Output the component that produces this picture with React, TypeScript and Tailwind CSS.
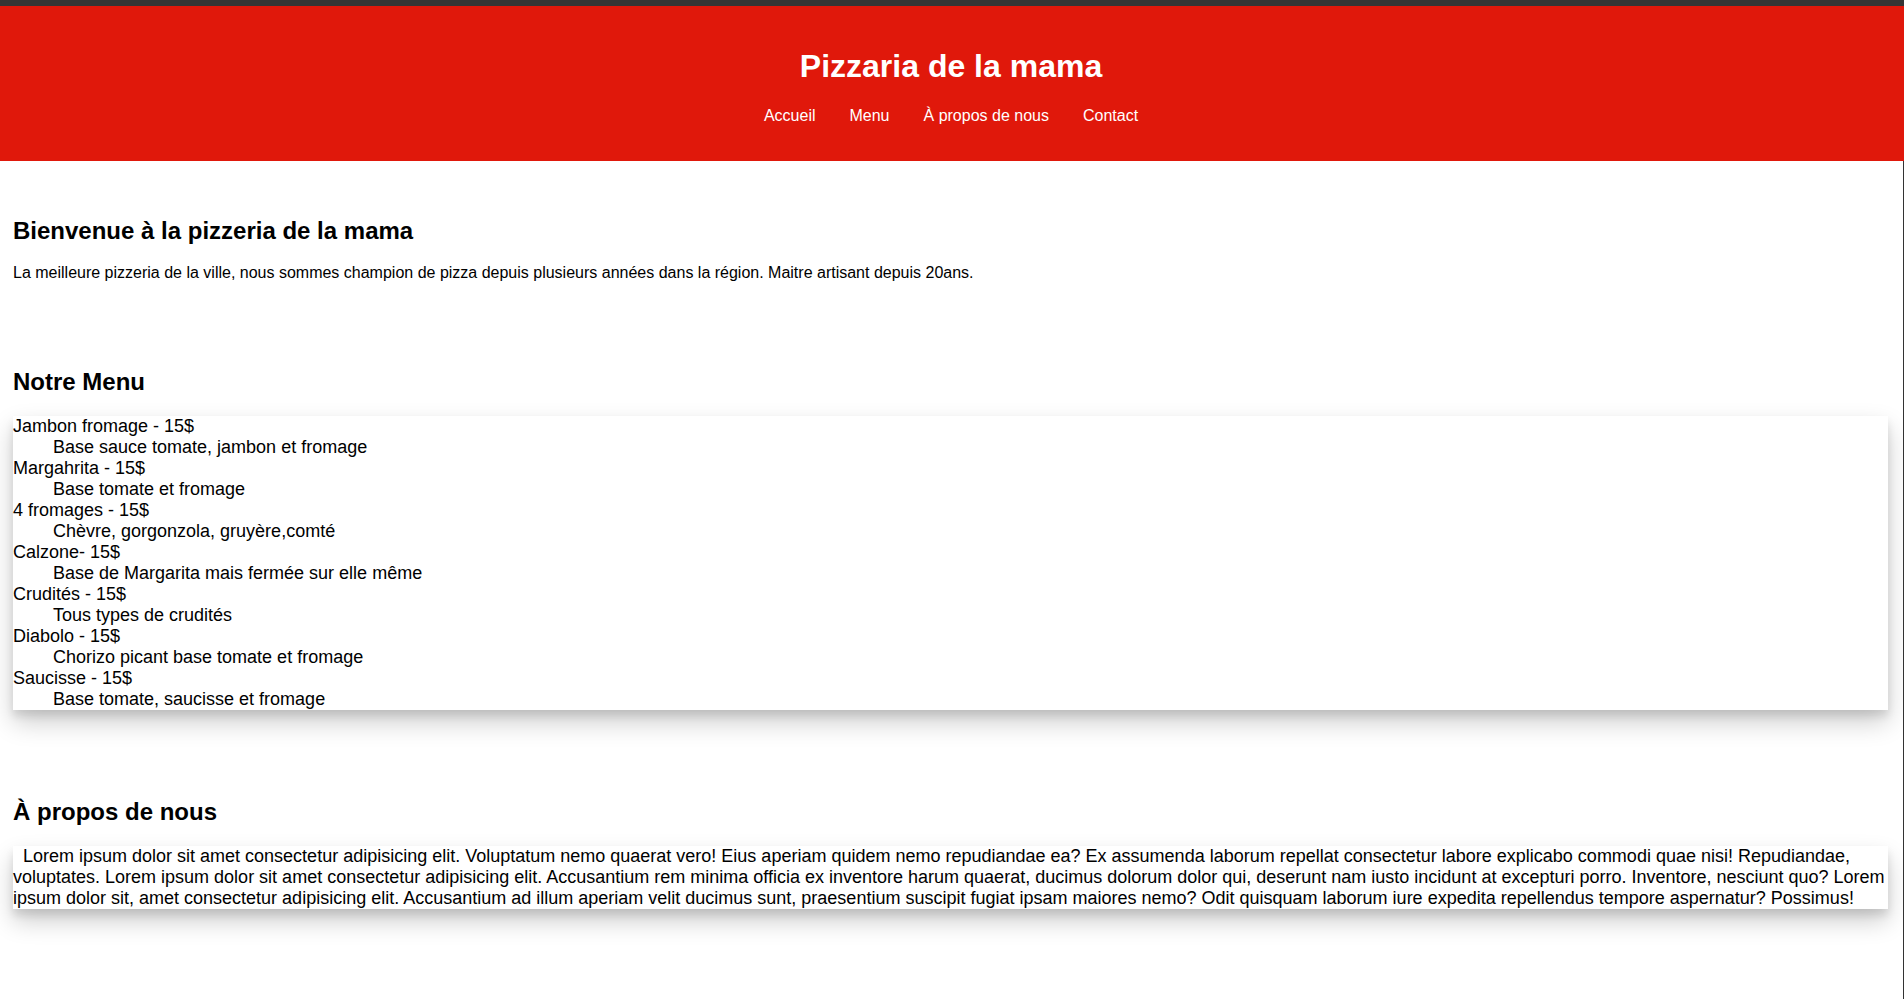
import React from "react";

const navLinks = ["Accueil", "Menu", "À propos de nous", "Contact"];

const pizzas = [
  { name: "Jambon fromage - 15$", desc: "Base sauce tomate, jambon et fromage" },
  { name: "Margahrita - 15$", desc: "Base tomate et fromage" },
  { name: "4 fromages - 15$", desc: "Chèvre, gorgonzola, gruyère,comté" },
  { name: "Calzone- 15$", desc: "Base de Margarita mais fermée sur elle même" },
  { name: "Crudités - 15$", desc: "Tous types de crudités" },
  { name: "Diabolo - 15$", desc: "Chorizo picant base tomate et fromage" },
  { name: "Saucisse - 15$", desc: "Base tomate, saucisse et fromage" },
];

const aboutText =
  "\u00a0\u00a0Lorem ipsum dolor sit amet consectetur adipisicing elit. Voluptatum nemo quaerat vero! Eius aperiam quidem nemo repudiandae ea? Ex assumenda laborum repellat consectetur labore explicabo commodi quae nisi! Repudiandae, voluptates. Lorem ipsum dolor sit amet consectetur adipisicing elit. Accusantium rem minima officia ex inventore harum quaerat, ducimus dolorum dolor qui, deserunt nam iusto incidunt at excepturi porro. Inventore, nesciunt quo? Lorem ipsum dolor sit, amet consectetur adipisicing elit. Accusantium ad illum aperiam velit ducimus sunt, praesentium suscipit fugiat ipsam maiores nemo? Odit quisquam laborum iure expedita repellendus tempore aspernatur? Possimus!";

function App() {
  return (
    <div className="min-h-screen bg-white text-black font-['Liberation_Sans',Arial,sans-serif] flex flex-col">
      <div className="h-[6px] bg-[#353535]" />
      <header className="bg-[#e0180b] text-white flex flex-col items-center pt-[42px] pb-[36px] pr-[2px]">
        <h1 className="text-[32px] font-bold leading-[37px]">Pizzaria de la mama</h1>
        <nav className="mt-[21px] flex gap-[34px] text-[16px] leading-[19px]">
          {navLinks.map((link) => (
            <a key={link} href="#" className="text-white no-underline">
              {link}
            </a>
          ))}
        </nav>
      </header>
      <main className="flex-1 border-r border-[#333] pl-[13px] pr-[15px] pb-[80px]">
        <section>
          <h2 className="mt-[56px] text-[24px] font-bold leading-[28px]">
            Bienvenue à la pizzeria de la mama
          </h2>
          <p className="mt-[19px] text-[16px] leading-[18px]">
            La meilleure pizzeria de la ville, nous sommes champion de pizza depuis plusieurs années dans la région. Maitre artisant depuis 20ans.
          </p>
        </section>
        <section>
          <h2 className="mt-[86px] text-[24px] font-bold leading-[28px]">Notre Menu</h2>
          <dl className="mt-[20px] bg-white text-[18px] leading-[21px] shadow-[0_12px_24px_rgba(0,0,0,0.2),0_6px_8px_rgba(0,0,0,0.1)]">
            {pizzas.map((p) => (
              <React.Fragment key={p.name}>
                <dt>{p.name}</dt>
                <dd className="ml-[40px]">{p.desc}</dd>
              </React.Fragment>
            ))}
          </dl>
        </section>
        <section>
          <h2 className="mt-[88px] text-[24px] font-bold leading-[28px]">À propos de nous</h2>
          <p className="mt-[20px] bg-white text-[18px] leading-[21px] shadow-[0_12px_24px_rgba(0,0,0,0.2),0_6px_8px_rgba(0,0,0,0.1)]">
            {aboutText}
          </p>
        </section>
      </main>
    </div>
  );
}

export default App;
